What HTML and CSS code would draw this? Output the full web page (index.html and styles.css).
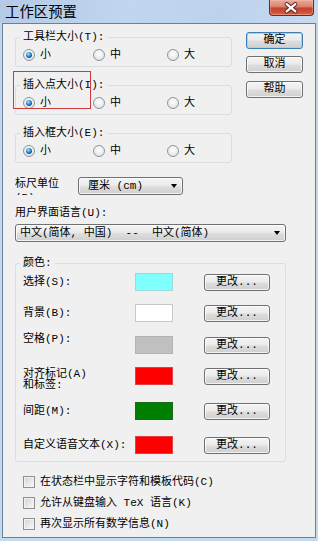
FILE: index.html
```html
<!DOCTYPE html>
<html lang="zh-CN">
<head>
<meta charset="utf-8">
<title>工作区预置</title>
<link rel="stylesheet" href="styles.css">
</head>
<body>
<div class="window">
  <div class="titlebar">
    <span class="title">工作区预置</span>
    <div class="close">
      <svg width="45" height="16" viewBox="0 0 45 16">
        <path d="M18 4 L27 11.5 M27 4 L18 11.5" stroke="#5a2219" stroke-width="4.2" stroke-linecap="round" fill="none"/>
        <path d="M18 4 L27 11.5 M27 4 L18 11.5" stroke="#ffffff" stroke-width="2.3" stroke-linecap="round" fill="none"/>
      </svg>
    </div>
  </div>
  <div class="client">
    <div class="top">
      <div class="groups">
        <fieldset class="group">
          <legend>工具栏大小(T):</legend>
          <div class="radios">
            <span class="opt"><span class="radio on"></span>小</span>
            <span class="opt"><span class="radio"></span>中</span>
            <span class="opt"><span class="radio"></span>大</span>
          </div>
        </fieldset>
        <fieldset class="group">
          <legend>插入点大小(I):</legend>
          <div class="radios">
            <span class="opt"><span class="radio on"></span>小</span>
            <span class="opt"><span class="radio"></span>中</span>
            <span class="opt"><span class="radio"></span>大</span>
          </div>
        </fieldset>
        <fieldset class="group">
          <legend>插入框大小(E):</legend>
          <div class="radios">
            <span class="opt"><span class="radio on"></span>小</span>
            <span class="opt"><span class="radio"></span>中</span>
            <span class="opt"><span class="radio"></span>大</span>
          </div>
        </fieldset>
      </div>
      <div class="buttons">
        <div class="btn default">确定</div>
        <div class="btn">取消</div>
        <div class="btn help">帮助</div>
      </div>
    </div>

    <div class="ruler">
      <div class="ruler-label">标尺单位(R):</div>
      <div class="combo small"><span>厘米 (cm)</span><span class="arrow"></span></div>
    </div>

    <div class="lang-label">用户界面语言(U):</div>
    <div class="combo wide"><span>中文(简体, 中国)  --  中文(简体)</span><span class="arrow"></span></div>

    <fieldset class="group colors">
      <legend>颜色:</legend>
      <div class="crows">
        <div class="crow"><span class="clabel">选择(S):</span><span class="swatch cyan"></span><div class="btn change">更改...</div></div>
        <div class="crow"><span class="clabel">背景(B):</span><span class="swatch white"></span><div class="btn change">更改...</div></div>
        <div class="crow"><span class="clabel lift">空格(P):</span><span class="swatch gray"></span><div class="btn change">更改...</div></div>
        <div class="crow"><span class="clabel two">对齐标记(A)<br>和标签:</span><span class="swatch red"></span><div class="btn change">更改...</div></div>
        <div class="crow"><span class="clabel">间距(M):</span><span class="swatch green"></span><div class="btn change">更改...</div></div>
        <div class="crow"><span class="clabel">自定义语音文本(X):</span><span class="swatch red"></span><div class="btn change">更改...</div></div>
      </div>
    </fieldset>

    <div class="checks">
      <div class="chk"><span class="box"></span>在状态栏中显示字符和模板代码(C)</div>
      <div class="chk"><span class="box"></span>允许从键盘输入 TeX 语言(K)</div>
      <div class="chk"><span class="box"></span>再次显示所有数学信息(N)</div>
    </div>

    <div class="highlight"></div>
  </div>
</div>
</body>
</html>
```

FILE: styles.css
```css
html, body {
  margin: 0;
  padding: 0;
  background: #c3d7ef;
}

.window {
  width: 318px;
  height: 541px;
  display: flex;
  flex-direction: column;
  background: linear-gradient(180deg, #b5cde9 0px, #c2d6ee 23px, #c5d9f0 100%);
  font-family: "Liberation Mono", "Noto Sans CJK SC", monospace;
  font-size: 11px;
  color: #000;
}

.titlebar {
  flex: 0 0 23px;
  height: 23px;
  display: flex;
  align-items: flex-start;
  background: linear-gradient(100deg, #b3cbe7 0%, #c0d5ee 40%, #bdd3ec 70%, #c6daf1 100%);
}

.title {
  font-family: "Noto Sans CJK SC", sans-serif;
  font-size: 14.4px;
  line-height: 17px;
  padding: 2px 0 0 5px;
  color: #000;
}

.close {
  margin-left: auto;
  margin-right: 4px;
  width: 45px;
  height: 16px;
  box-sizing: border-box;
  border: 1px solid #6b2a21;
  border-top: none;
  border-radius: 0 0 4px 4px;
  background: linear-gradient(180deg, #e9a999 0%, #dc8672 42%, #c4442f 55%, #cf5239 85%, #dd7156 100%);
  box-shadow: inset 0 0 0 1px rgba(255, 200, 190, 0.35);
  display: flex;
}

.close svg {
  display: block;
  margin-left: -1px;
}

.client {
  position: relative;
  margin: 0 2px;
  height: 515px;
  box-sizing: border-box;
  border: 1px solid #6c7f98;
  background: #f0f0f0;
  padding: 6px 0 0 12px;
}

.top {
  display: flex;
}

.groups {
  width: 217px;
  display: flex;
  flex-direction: column;
  gap: 11px;
}

.group {
  margin: 0;
  min-width: 0;
  box-sizing: border-box;
  width: 217px;
  padding: 4px 0 4px 7px;
  border: 1px solid #d5dfe5;
  border-radius: 3px;
}

.group legend {
  margin-left: -3px;
  padding: 0 3px;
  line-height: 14px;
}

.radios {
  display: grid;
  grid-template-columns: 70px 74px auto;
}

.opt {
  display: flex;
  align-items: center;
  gap: 5px;
  height: 14px;
  line-height: 14px;
}

.radio {
  position: relative;
  width: 12px;
  height: 12px;
  box-sizing: border-box;
  border-radius: 50%;
  border: 1px solid #8a96a4;
  background: radial-gradient(circle at 50% 40%, #ffffff 0%, #ececec 55%, #d2d2d2 100%);
}

.radio.on::after {
  content: "";
  position: absolute;
  left: 2px;
  top: 2px;
  width: 6px;
  height: 6px;
  border-radius: 50%;
  background: radial-gradient(circle at 40% 35%, #b5ecff 0%, #3a9ad8 35%, #0e4a86 75%, #0a3565 100%);
}

.buttons {
  margin-left: 14px;
  padding-top: 2px;
  display: flex;
  flex-direction: column;
  gap: 7px;
}

.btn {
  box-sizing: border-box;
  width: 57px;
  height: 17px;
  border: 1px solid #707070;
  border-radius: 3px;
  background: linear-gradient(180deg, #f4f4f4 0%, #ebebeb 45%, #dddddd 55%, #cfcfcf 100%);
  box-shadow: inset 0 0 0 1px rgba(255, 255, 255, 0.75);
  text-align: center;
  line-height: 15px;
  font-size: 11px;
}

.btn.default {
  border-color: #3a7fb6;
  box-shadow: inset 0 0 0 1px #8fdcf8;
}

.btn.help {
  margin-top: 1px;
}

.ruler {
  display: flex;
  margin-top: 14px;
}

.ruler-label {
  flex: 0 0 63px;
  width: 63px;
  height: 18px;
  overflow: hidden;
  line-height: 14px;
}

.combo {
  box-sizing: border-box;
  height: 18px;
  border: 1px solid #707070;
  border-radius: 3px;
  background: linear-gradient(180deg, #f4f4f4 0%, #ebebeb 45%, #dddddd 55%, #cfcfcf 100%);
  box-shadow: inset 0 0 0 1px rgba(255, 255, 255, 0.75);
  display: flex;
  align-items: center;
  line-height: 16px;
  white-space: pre;
}

.combo.small {
  width: 105px;
  padding-left: 9px;
}

.combo.wide {
  width: 271px;
  margin-top: 4px;
  padding-left: 4px;
}

.arrow {
  margin-left: auto;
  margin-right: 5px;
  width: 0;
  height: 0;
  border-left: 3.5px solid transparent;
  border-right: 3.5px solid transparent;
  border-top: 4px solid #000;
}

.lang-label {
  margin-top: 11px;
  line-height: 14px;
}

.group.colors {
  width: 271px;
  margin-top: 14px;
  padding: 3px 0 7px 7px;
}

.crows {
  display: grid;
  grid-template-rows: 31px 32px 31px 35px 34px 18px;
}

.crow {
  display: flex;
  align-items: center;
  height: 18px;
}

.clabel {
  flex: 0 0 112px;
  width: 112px;
  line-height: 14px;
}

.clabel.lift {
  margin-bottom: 12px;
}

.clabel.two {
  align-self: flex-start;
  margin-top: 2px;
  line-height: 11px;
}

.swatch {
  flex: 0 0 38px;
  width: 38px;
  height: 18px;
  box-sizing: border-box;
  border: 1px solid rgba(0, 0, 0, 0.12);
}

.swatch.cyan { background: #80ffff; border-color: #9fd9d9; }
.swatch.white { background: #ffffff; border-color: #c8c8c8; }
.swatch.gray { background: #c0c0c0; border-color: #b4b4b4; }
.swatch.red { background: #ff0000; border-color: #e04040; }
.swatch.green { background: #008000; border-color: #1a6a1a; }

.btn.change {
  width: 66px;
  margin-left: 31px;
  align-self: flex-end;
}

.checks {
  margin-top: 13px;
  padding-left: 8px;
  display: flex;
  flex-direction: column;
  gap: 7px;
}

.chk {
  display: flex;
  align-items: center;
  gap: 5px;
  height: 14px;
  line-height: 14px;
}

.box {
  width: 12px;
  height: 12px;
  box-sizing: border-box;
  border: 1px solid #8e8f8f;
  background: linear-gradient(135deg, #d2d2d2 0%, #e6e6e6 50%, #f8f8f8 100%);
  box-shadow: inset 0 0 0 1px #f3f3f3;
}

.highlight {
  position: absolute;
  left: 10px;
  top: 47px;
  width: 78px;
  height: 38px;
  box-sizing: border-box;
  border: 1px solid #cc3a3a;
}
```
